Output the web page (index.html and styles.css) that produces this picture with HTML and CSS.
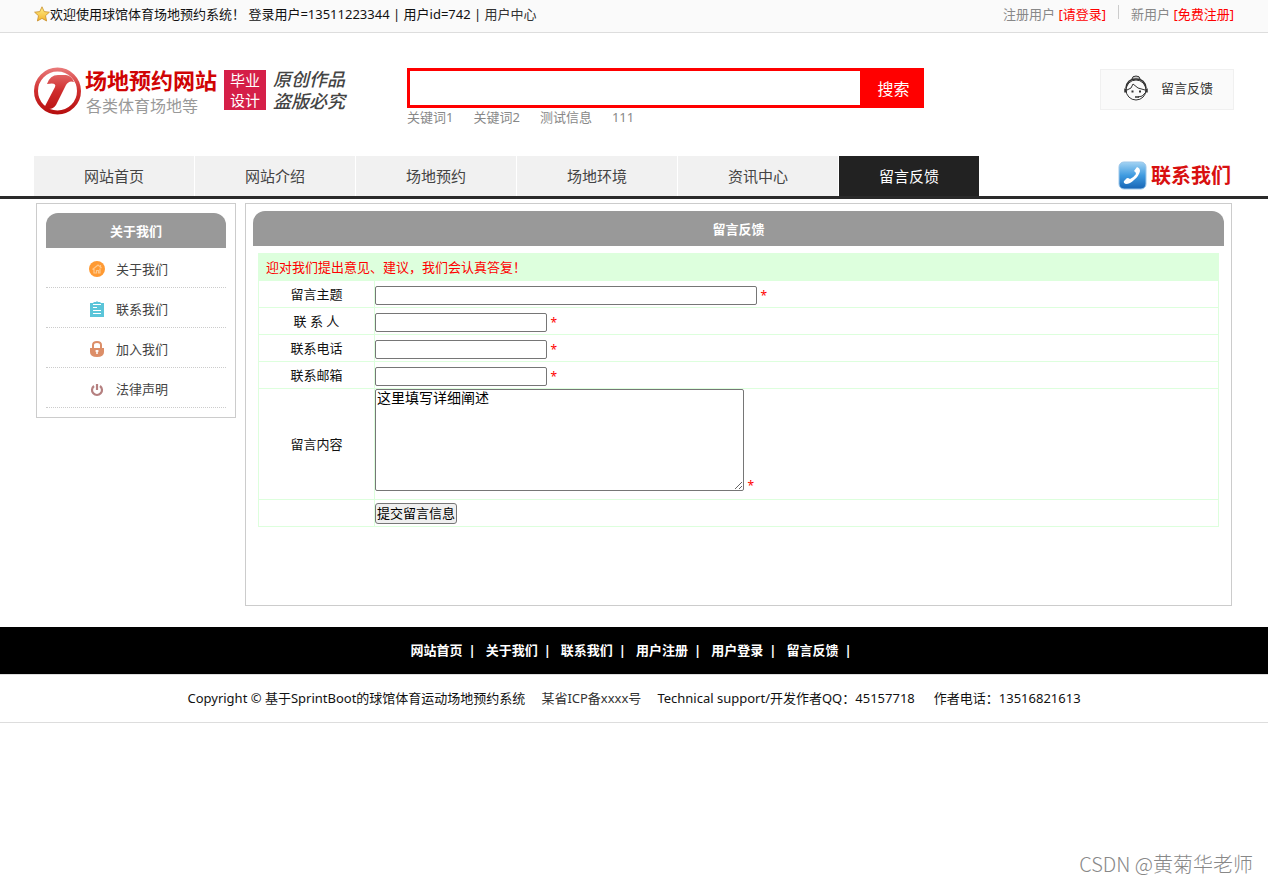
FILE: index.html
```html
<!DOCTYPE html>
<html lang="zh-CN">
<head>
<meta charset="utf-8">
<title>留言反馈</title>
<link rel="stylesheet" href="styles.css">
</head>
<body>
<div class="topbar">
  <div class="wrap topbar-row">
    <div class="welcome">
      <svg class="star" viewBox="0 0 16 16" aria-hidden="true"><defs><linearGradient id="gold" x1="0" y1="0" x2="0" y2="1"><stop offset="0" stop-color="#fff08a"/><stop offset="1" stop-color="#f3b32c"/></linearGradient></defs><path d="M8 .8l2.2 4.8 5.2.6-3.9 3.5 1.1 5.3L8 12.4 3.4 15l1.100-5.300L.6 6.200l5.200-.6z" fill="url(#gold)" stroke="#c98f2b" stroke-width=".8"/></svg>
      <span>欢迎使用球馆体育场地预约系统！ 登录用户=13511223344 | 用户id=742 | <a class="dark" href="#">用户中心</a></span>
    </div>
    <div class="account">
      <span>注册用户 <a class="red" href="#">[请登录]</a></span>
      <span class="newuser">新用户 <a class="red" href="#">[免费注册]</a></span>
    </div>
  </div>
</div>

<header class="wrap header">
  <a class="logo" href="#">
    <svg class="logo-mark" viewBox="0 0 47 48" aria-hidden="true"><defs><linearGradient id="red" gradientUnits="userSpaceOnUse" x1="0" y1="0" x2="0" y2="48"><stop offset="0" stop-color="#ea7d7d"/><stop offset=".5" stop-color="#cf2d2d"/><stop offset="1" stop-color="#b50d0d"/></linearGradient></defs><circle cx="23.500" cy="24" r="21.500" fill="#fff" stroke="url(#red)" stroke-width="4"/><path d="M13 17q3-9 11-9h8q6 1 8 7-5-2-8 3L22 38q-4 6-12 3l11-21q2-5-8-3z" fill="url(#red)"/></svg>
    <span class="logo-text"><strong class="logo-name">场地预约网站</strong><span class="logo-sub">各类体育场地等</span></span>
    <span class="badge">毕业<br>设计</span>
    <span class="motto"><span>原创作品</span><span>盗版必究</span></span>
  </a>
  <div class="search">
    <form class="search-form">
      <input class="search-input" type="text" aria-label="搜索关键词">
      <button class="search-button" type="button">搜索</button>
    </form>
    <div class="keywords"><a href="#">关键词1</a><a href="#">关键词2</a><a href="#">测试信息</a><a href="#">111</a></div>
  </div>
  <a class="service" href="#">
    <svg class="service-icon" viewBox="0 0 24 26" fill="none" stroke="#333" aria-hidden="true"><circle cx="12" cy="15" r="10"/><path d="M8 4q0-3 4-3t4 3" fill="#ccc"/><path d="M2 13q1-9 10-9t10 9" stroke-width="1.500"/><path d="M3 15q5-1 6-6 4 5 12 6"/><path d="M1.500 13.500v4M22.500 13.500v4" stroke-width="2.500"/><path d="M21 18q-2 4-7 4"/><path d="M8.500 15.500v2M16 15.500v2" stroke-width="2"/><path d="M11 22h4" stroke-width="1.500"/></svg>
    <span>留言反馈</span>
  </a>
</header>

<nav class="nav">
  <div class="wrap nav-row">
    <div class="nav-items">
      <a href="#">网站首页</a><a href="#">网站介绍</a><a href="#">场地预约</a><a href="#">场地环境</a><a href="#">资讯中心</a><a class="active" href="#">留言反馈</a>
    </div>
    <a class="contact" href="#">
      <svg class="contact-icon" viewBox="0 0 29 30" aria-hidden="true"><defs><linearGradient id="blue" x1="0" y1="0" x2="0" y2="1"><stop offset="0" stop-color="#a3d3f3"/><stop offset=".5" stop-color="#3f9be0"/><stop offset="1" stop-color="#1765b5"/></linearGradient></defs><rect x="1" y="1" width="27" height="27" rx="5" fill="url(#blue)" stroke="#9cc7ea"/><path d="M19 6q3 1 3 4-1 5-6 9-4 4-8 4-3-1-2-3l3-3q2 0 3 1 4-2 6-5 0-2-2-3z" fill="#fff"/></svg>
      <span>联系我们</span>
    </a>
  </div>
</nav>

<div class="wrap content">
  <aside class="sidebar">
    <h2 class="bar">关于我们</h2>
    <ul class="menu">
      <li><a href="#"><svg viewBox="0 0 16 16" aria-hidden="true"><circle cx="8" cy="8" r="8" fill="#ff9a33"/><path d="M3.500 8.500L9 4l3.500 3M5 8v4h2.500V9.500h2V12H11V7.500M11.500 4v2" fill="none" stroke="#ffc88b" stroke-width="1.200"/></svg>关于我们</a></li>
      <li><a href="#"><svg viewBox="0 0 16 16" aria-hidden="true"><path d="M1 2h3l1-1h2l1-1 1 1h2l1 1h3v14H1z" fill="#5bc5d9"/><path d="M4 3.500h8M4 6.500h4M4 9.500h8M4 12.500h8" stroke="#fff" stroke-width="1.200"/></svg>联系我们</a></li>
      <li><a href="#"><svg viewBox="0 0 16 16" aria-hidden="true"><path d="M4 8V4q0-3 4-3t4 3v4" fill="none" stroke="#dc8e68" stroke-width="2"/><path d="M1 7h14v4q0 5-7 5t-7-5z" fill="#dc8e68"/><path d="M8 9v4M6.500 10h3" stroke="#fff" stroke-width="1.500"/></svg>加入我们</a></li>
      <li><a href="#"><svg viewBox="0 0 16 16" aria-hidden="true"><path d="M5 5a5 5 0 1 0 6 0M8 3v6" fill="none" stroke="#b58080" stroke-width="2.200"/></svg>法律声明</a></li>
    </ul>
  </aside>

  <main class="main">
    <h1 class="bar">留言反馈</h1>
    <form>
      <table class="form-table">
        <tr><td class="notice" colspan="2">迎对我们提出意见、建议，我们会认真答复！</td></tr>
        <tr><th><label for="topic">留言主题</label></th><td><input class="field wide" id="topic" type="text"> <span class="red star-mark">*</span></td></tr>
        <tr><th><label for="person">联 系 人</label></th><td><input class="field" id="person" type="text"> <span class="red star-mark">*</span></td></tr>
        <tr><th><label for="phone">联系电话</label></th><td><input class="field" id="phone" type="text"> <span class="red star-mark">*</span></td></tr>
        <tr><th><label for="mail">联系邮箱</label></th><td><input class="field" id="mail" type="text"> <span class="red star-mark">*</span></td></tr>
        <tr class="tall"><th><label for="message">留言内容</label></th><td><textarea class="message" id="message">这里填写详细阐述</textarea> <span class="red star-mark">*</span></td></tr>
        <tr><th></th><td><button class="submit" type="button">提交留言信息</button></td></tr>
      </table>
    </form>
  </main>
</div>

<footer>
  <div class="footer-nav"><a href="#">网站首页</a><a href="#">关于我们</a><a href="#">联系我们</a><a href="#">用户注册</a><a href="#">用户登录</a><a href="#">留言反馈</a></div>
  <div class="copyright"><span>Copyright © 基于SprintBoot的球馆体育运动场地预约系统</span><a class="dark" href="#">某省ICP备xxxx号</a><span class="support">Technical support/开发作者QQ：45157718</span><span>作者电话：13516821613</span></div>
</footer>
<div class="watermark">CSDN @黄菊华老师</div>
</body>
</html>
```
FILE: styles.css
```css
* { box-sizing: border-box; }
body {
  margin: 0;
  min-height: 100vh;
  position: relative;
  background: #fff;
  color: #111;
  font: 13px/20px "Noto Sans", "Noto Sans CJK SC", sans-serif;
}
a { color: inherit; text-decoration: none; }
h1, h2, ul { margin: 0; padding: 0; }
button, input, textarea { font: inherit; }
.wrap { max-width: 1200px; margin: 0 auto; }
.red { color: #f00; }
.dark { color: #333; }

.topbar { background: #fafafa; border-bottom: 1px solid #ddd; padding: 4px 0 8px; }
.topbar-row { display: flex; justify-content: space-between; }
.welcome { display: flex; align-items: center; }
.star { width: 16px; height: 16px; }
.account { display: flex; align-items: center; color: #888; gap: 12px; }
.newuser { position: relative; padding-left: 13px; }
.newuser::before { content: ""; position: absolute; left: 0; top: 1px; height: 14px; border-left: 1px solid #ccc; }

.header { display: flex; align-items: flex-start; padding: 35px 0 22px; }
.logo { display: flex; align-items: center; width: 373px; height: 46px; }
.logo-mark { width: 47px; height: 48px; }
.logo-text { display: flex; flex-direction: column; margin: 3px 7px 0 4px; }
.logo-name { font-size: 22px; line-height: 26px; color: #d00404; }
.logo-sub { font-size: 16px; line-height: 26px; color: #999; padding-left: 1px; }
.badge { width: 42px; height: 40px; margin-bottom: 2px; background: #d51f48; color: #fff; font-size: 15px; line-height: 20px; text-align: center; }
.motto { display: flex; flex-direction: column; margin: 0 0 2px 7px; font-size: 18px; font-style: italic; font-weight: 500; line-height: 22px; color: #444; }
.search { width: 517px; }
.search-form { display: flex; height: 40px; }
.search-input { flex: 1; min-width: 0; border: 3px solid #f00; border-right: 0; outline: 0; padding: 0 8px; }
.search-button { width: 64px; border: 0; background: #f00; color: #fff; font-size: 16px; padding: 2px 0 0 3px; }
.keywords { display: flex; gap: 20px; color: #888; height: 26px; line-height: 18px; }
.service { display: flex; align-items: center; gap: 13px; margin: 1px 0 0 auto; width: 134px; height: 41px; padding: 0 0 4px 23px; border: 1px solid #f0f0f0; background: #fafafa; color: #333; }
.service-icon { width: 24px; height: 26px; }

.nav { border-bottom: 3px solid #2a2a2a; }
.nav-row { display: flex; justify-content: space-between; }
.nav-items { display: flex; gap: 1px; }
.nav-items a { padding: 0 50px; line-height: 40px; background: #f1f1f1; color: #444; font-size: 15px; }
.nav-items .active { padding: 0 40px; background: #222; color: #fff; }
.contact { display: flex; align-items: center; gap: 4px; padding-right: 3px; color: #d81010; font-size: 20px; font-weight: 700; }
.contact-icon { width: 29px; height: 30px; }

.content { display: flex; align-items: flex-start; gap: 9px; padding: 4px 2px 21px; }
.sidebar { width: 200px; border: 1px solid #ccc; padding: 9px; }
.bar { height: 35px; background: #999; color: #fff; border-radius: 12px 12px 0 0; font-size: 13px; line-height: 36px; text-align: center; }
.menu { list-style: none; }
.menu li { border-bottom: 1px dotted #ccc; }
.menu a { display: flex; align-items: center; gap: 11px; height: 39px; padding: 2px 0 0 43px; color: #444; }
.menu svg { width: 16px; height: 16px; }

.main { flex: 1; min-height: 403px; border: 1px solid #ccc; padding: 7px; }
.main form { padding: 7px 5px; }
.form-table { width: 100%; border-collapse: collapse; }
.form-table td, .form-table th { border: 1px solid #dfd; padding: 0; height: 27px; }
.form-table th { width: 116px; font-weight: 400; text-align: center; }
.form-table .notice { background: #dfd; color: #f00; padding-left: 7px; }
.form-table .tall td { height: 111px; vertical-align: top; }
.field { width: 172px; height: 19px; border: 1px solid #767676; border-radius: 2px; padding: 1px 2px; vertical-align: middle; }
.field.wide { width: 382px; }
.star-mark { display: inline-block; vertical-align: bottom; line-height: 18px; font-size: 12px; }
.tall .star-mark { line-height: 10px; }
.message { width: 369px; height: 102px; border: 1px solid #767676; border-radius: 2px; padding: 0 1px; font-size: 14px; line-height: 16px; vertical-align: bottom; }
.submit { height: 21px; border: 1px solid #767676; border-radius: 3px; background: #efefef; color: #000; padding: 0 1px; line-height: 19px; vertical-align: middle; }

.footer-nav { display: flex; justify-content: center; gap: 10px; padding-right: 6px; background: #000; color: #fff; font-weight: 700; line-height: 47px; }
.footer-nav a::after { content: "|"; margin-left: 6px; }
.copyright { display: flex; justify-content: center; gap: 16px; border: solid #ddd; border-width: 1px 0; line-height: 47px; }
.support { padding-right: 3px; }
.watermark { position: absolute; right: 15px; bottom: 8px; font-family: "Noto Sans CJK SC", sans-serif; font-size: 20px; font-weight: 300; line-height: 24px; color: #888; }
```
